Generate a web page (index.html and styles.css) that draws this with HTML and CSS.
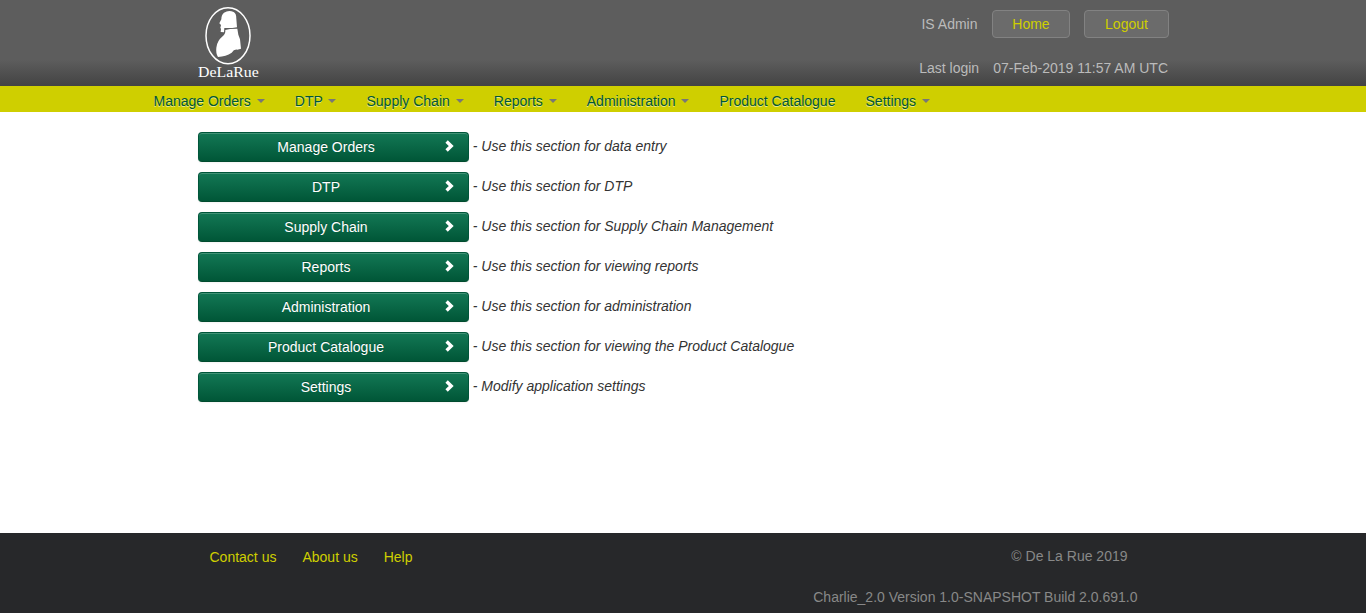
FILE: index.html
```html
<!DOCTYPE html>
<html lang="en">
<head>
<meta charset="utf-8">
<title>De La Rue</title>
<link rel="stylesheet" href="styles.css">
</head>
<body>
<header class="header">
  <svg class="logo" viewBox="24 0 186 246" role="img" aria-label="De La Rue">
    <ellipse class="logo-ring" cx="114" cy="107" rx="66" ry="84"/>
    <path class="logo-bust" d="M102 38Q116 29 131 36Q139 40 139 56L141 82L127 84L103 84L102 97L92 96L93 86L91 84L93 75L88 70L94 58Q94 44 102 38Z"/>
    <path class="logo-bust" d="M106 90L120 87L142 86L145 104L150 118L153 146L142 149Q132 147 125 158Q108 169 84 171Q77 160 79 143Q81 123 98 109Q107 102 106 90Z"/>
    <text class="logo-text" x="24" y="231" textLength="182" lengthAdjust="spacingAndGlyphs">DeLaRue</text>
  </svg>
  <div class="account">
    <div class="account-row"><span>IS Admin</span><a class="account-btn home">Home</a><a class="account-btn logout">Logout</a></div>
    <div class="login-row"><span>Last login</span><span>07-Feb-2019 11:57 AM UTC</span></div>
  </div>
</header>
<nav class="nav">
  <a>Manage Orders <b class="caret"></b></a>
  <a>DTP <b class="caret"></b></a>
  <a>Supply Chain <b class="caret"></b></a>
  <a>Reports <b class="caret"></b></a>
  <a>Administration <b class="caret"></b></a>
  <a>Product Catalogue</a>
  <a>Settings <b class="caret"></b></a>
</nav>
<main class="main">
  <div class="row"><a class="btn"><span>Manage Orders</span><svg class="chev" viewBox="0 0 9 12"><path d="M1.600 1.600L6.200 6L1.600 10.400"/></svg></a><em>- Use this section for data entry</em></div>
  <div class="row"><a class="btn"><span>DTP</span><svg class="chev" viewBox="0 0 9 12"><path d="M1.600 1.600L6.200 6L1.600 10.400"/></svg></a><em>- Use this section for DTP</em></div>
  <div class="row"><a class="btn"><span>Supply Chain</span><svg class="chev" viewBox="0 0 9 12"><path d="M1.600 1.600L6.200 6L1.600 10.400"/></svg></a><em>- Use this section for Supply Chain Management</em></div>
  <div class="row"><a class="btn"><span>Reports</span><svg class="chev" viewBox="0 0 9 12"><path d="M1.600 1.600L6.200 6L1.600 10.400"/></svg></a><em>- Use this section for viewing reports</em></div>
  <div class="row"><a class="btn"><span>Administration</span><svg class="chev" viewBox="0 0 9 12"><path d="M1.600 1.600L6.200 6L1.600 10.400"/></svg></a><em>- Use this section for administration</em></div>
  <div class="row"><a class="btn"><span>Product Catalogue</span><svg class="chev" viewBox="0 0 9 12"><path d="M1.600 1.600L6.200 6L1.600 10.400"/></svg></a><em>- Use this section for viewing the Product Catalogue</em></div>
  <div class="row"><a class="btn"><span>Settings</span><svg class="chev" viewBox="0 0 9 12"><path d="M1.600 1.600L6.200 6L1.600 10.400"/></svg></a><em>- Modify application settings</em></div>
</main>
<footer class="footer">
  <div class="footer-links"><a>Contact us</a><a>About us</a><a>Help</a></div>
  <div class="footer-info"><span class="copyright">© De La Rue 2019</span><span>Charlie_2.0 Version 1.0-SNAPSHOT Build 2.0.691.0</span></div>
</footer>
</body>
</html>
```
FILE: styles.css
```css
* { box-sizing: border-box; }
body {
  margin: 0;
  height: 613px;
  display: flex;
  flex-direction: column;
  background: #fff;
  color: #333;
  font: 14px/20px "Liberation Sans", Arial, sans-serif;
}
.header {
  height: 86px;
  padding: 0 197px 0 198px;
  display: flex;
  justify-content: space-between;
  color: #bbb;
  background: linear-gradient(#5d5d5d 0, #5d5d5d 60px, #434343 86px);
}
.logo { width: 62px; height: 82px; }
.logo-ring { fill: none; stroke: #fff; stroke-width: 4.500; }
.logo-bust { fill: #fff; }
.logo-text { fill: #fff; font: 43px "Liberation Serif", serif; }
.account { padding-top: 10px; }
.account-row { display: flex; justify-content: flex-end; line-height: 28px; }
.account-btn {
  height: 28px;
  margin-left: 14px;
  line-height: 26px;
  text-align: center;
  color: #cfcf00;
  background: #6b6b6b;
  border: 1px solid #828282;
  border-radius: 4px;
}
.account-row span { margin-right: 0.500px; }
.home { width: 78px; }
.logout { width: 85px; }
.login-row { display: flex; gap: 14px; justify-content: flex-end; margin: 20px 1px 0 0; }
.nav {
  height: 26px;
  padding: 5px 0 0 153.500px;
  display: flex;
  gap: 30.100px;
  background: #cfcf00;
  color: #005637;
  text-shadow: 0 1px 0 #fff8;
}
.caret {
  display: inline-block;
  margin: 8px 0 0 2px;
  vertical-align: top;
  border: 4px solid transparent;
  border-top-color: #777;
  border-bottom: 0;
}
.main { flex: 1; padding: 20px 0 0 198px; }
.row { display: flex; align-items: flex-start; height: 40px; }
.row em { margin-left: 3.800px; line-height: 28px; }
.btn {
  width: 271px;
  height: 30px;
  padding: 0 14px 0 0;
  display: flex;
  color: #fff;
  line-height: 28px;
  border: 1px solid #00563a;
  border-bottom-color: #004b2e;
  border-radius: 4px;
  background: linear-gradient(#137855, #005637);
  box-shadow: inset 0 1px 0 #ffffff33, 0 1px 2px #0000000d;
  text-shadow: 0 -1px 0 #00000040;
}
.btn span { flex: 1; padding-left: 8px; text-align: center; }
.chev { width: 9px; height: 12px; margin-top: 7px; }
.chev path { fill: none; stroke: #fff; stroke-width: 3.400; }
.footer {
  height: 80px;
  padding: 14px 228.500px 0 209.500px;
  display: flex;
  justify-content: space-between;
  background: #27282a;
  color: #888;
}
.footer-links { display: flex; gap: 26px; color: #cfcf00; }
.footer-info { display: flex; flex-direction: column; align-items: flex-end; gap: 21px; margin-top: -1px; }
.copyright { margin-right: 10px; }
```
